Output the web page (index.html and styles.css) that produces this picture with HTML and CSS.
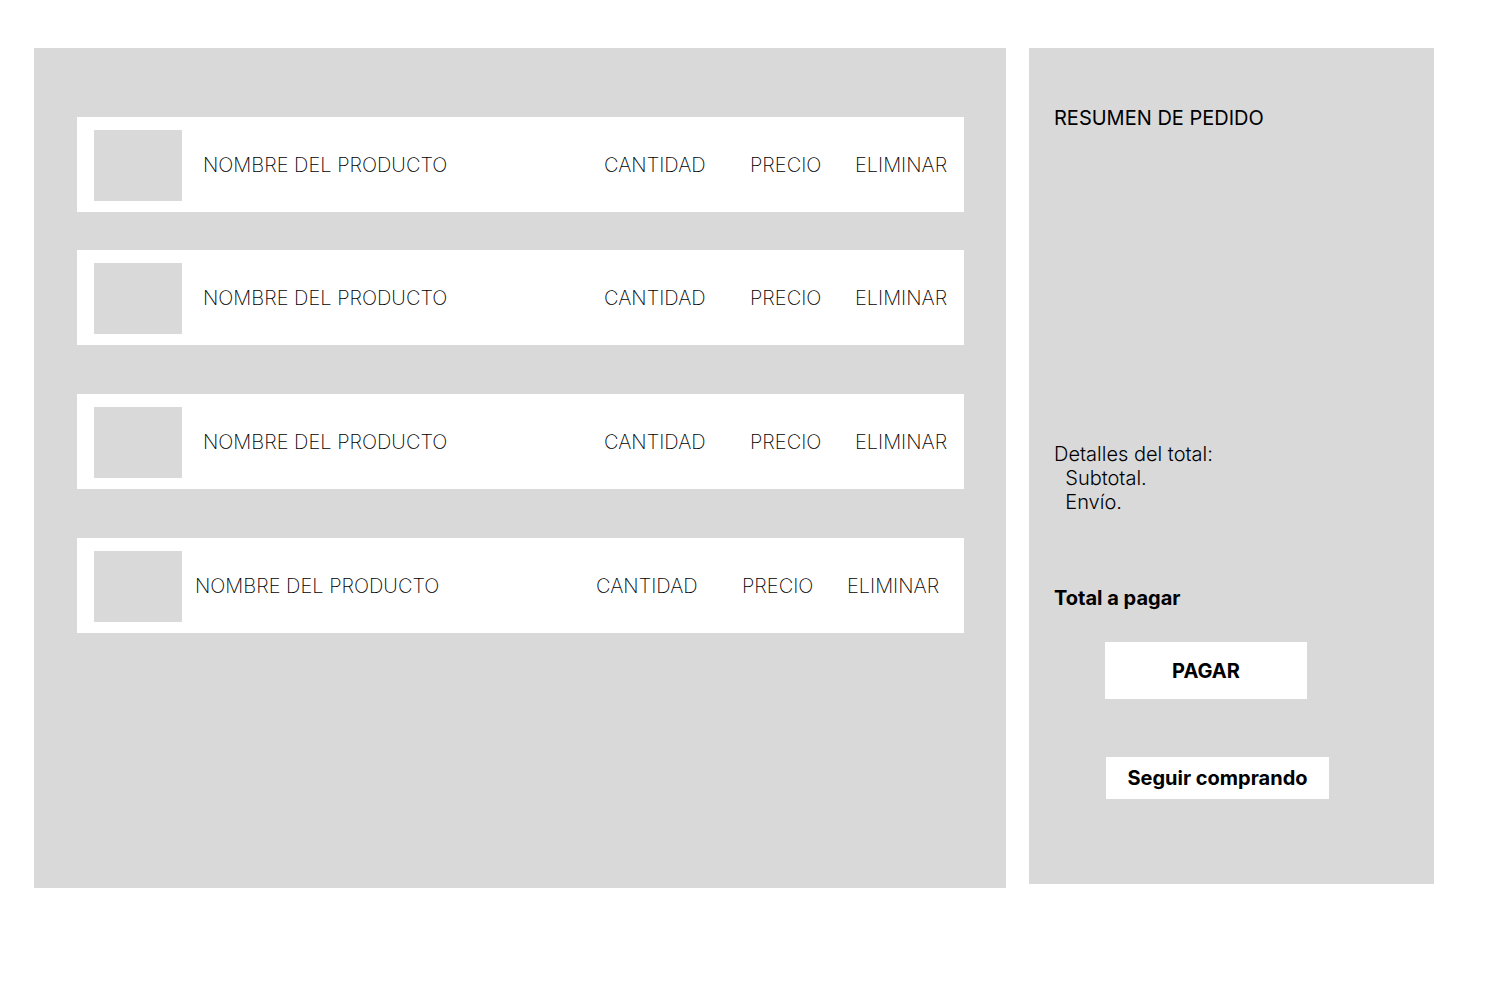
FILE: index.html
```html
<!DOCTYPE html>
<html lang="es">
<head>
<meta charset="utf-8">
<title>Carrito</title>
<link rel="stylesheet" href="styles.css">
</head>
<body>
<div class="page">
  <main class="cart">
    <div class="row r1">
      <div class="thumb"></div>
      <span class="name">NOMBRE DEL PRODUCTO</span>
      <span class="cell">CANTIDAD</span>
      <span class="cell">PRECIO</span>
      <span class="cell">ELIMINAR</span>
    </div>
    <div class="row r2">
      <div class="thumb"></div>
      <span class="name">NOMBRE DEL PRODUCTO</span>
      <span class="cell">CANTIDAD</span>
      <span class="cell">PRECIO</span>
      <span class="cell">ELIMINAR</span>
    </div>
    <div class="row r3">
      <div class="thumb"></div>
      <span class="name">NOMBRE DEL PRODUCTO</span>
      <span class="cell">CANTIDAD</span>
      <span class="cell">PRECIO</span>
      <span class="cell">ELIMINAR</span>
    </div>
    <div class="row r4 shifted">
      <div class="thumb"></div>
      <span class="name">NOMBRE DEL PRODUCTO</span>
      <span class="cell">CANTIDAD</span>
      <span class="cell">PRECIO</span>
      <span class="cell">ELIMINAR</span>
    </div>
  </main>
  <aside class="summary">
    <h2 class="title">RESUMEN DE PEDIDO</h2>
    <div class="details">Detalles del total:
  Subtotal.
  Envío.</div>
    <div class="total">Total a pagar</div>
    <button class="btn pay">PAGAR</button>
    <button class="btn continue">Seguir comprando</button>
  </aside>
</div>
</body>
</html>
```

FILE: styles.css
```css
* { box-sizing: border-box; }
html, body { margin: 0; padding: 0; background: #fff; }
body {
  font-family: Inter, "Noto Sans", sans-serif;
  color: #000;
  width: 1512px;
  height: 984px;
  overflow: hidden;
}
.page {
  display: flex;
  align-items: flex-start;
  gap: 23px;
  padding: 48px 0 0 34px;
}
.cart {
  width: 972px;
  height: 840px;
  background: #d9d9d9;
  padding: 69px 42px 0 43px;
  display: flex;
  flex-direction: column;
}
.row {
  height: 95px;
  background: #fff;
  display: grid;
  grid-template-columns: 88px 422px 146px 105px auto;
  align-items: center;
  padding-left: 17px;
  font-size: 20px;
  font-weight: 220;
  line-height: 24px;
  color: #000;
}
.r2 { margin-top: 38px; }
.r3, .r4 { margin-top: 49px; }
.thumb {
  width: 88px;
  height: 71px;
  margin-top: 2px;
  background: #d9d9d9;
}
.name { padding-left: 21px; }
.shifted { grid-template-columns: 88px 414px 146px 105px auto; }
.shifted .name { padding-left: 13px; }
.cell { white-space: nowrap; }

.summary {
  width: 405px;
  height: 836px;
  background: #d9d9d9;
  padding: 58px 25px 0 25px;
  display: flex;
  flex-direction: column;
  align-items: flex-start;
}
.title {
  margin: 0;
  font-size: 20px;
  font-weight: 400;
  line-height: 24px;
}
.details {
  margin-top: 312px;
  white-space: pre;
  font-size: 20px;
  font-weight: 280;
  line-height: 24px;
  color: #000;
}
.total {
  margin-top: 72px;
  font-size: 20px;
  font-weight: 700;
  line-height: 24px;
}
.btn {
  border: none;
  background: #fff;
  font-family: inherit;
  font-size: 20px;
  font-weight: 700;
  color: #000;
  padding: 0;
  line-height: 24px;
}
.pay {
  margin: 32px 0 0 51px;
  width: 202px;
  height: 57px;
}
.continue {
  margin: 58px 0 0 52px;
  width: 223px;
  height: 42px;
}
```
